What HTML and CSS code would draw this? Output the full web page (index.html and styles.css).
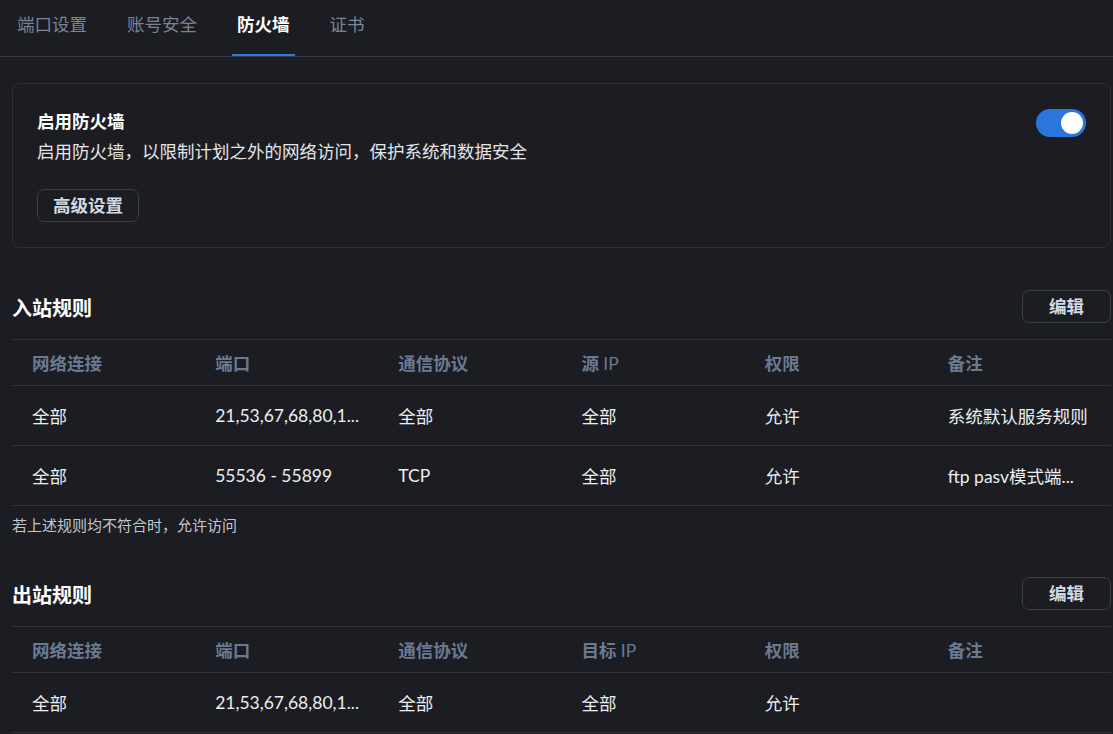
FILE: index.html
```html
<!DOCTYPE html>
<html lang="zh-CN">
<head>
<meta charset="utf-8">
<title>防火墙</title>
<link rel="stylesheet" href="styles.css">
</head>
<body>
<div class="page">
  <nav class="tabs">
    <div class="tab">端口设置</div>
    <div class="tab">账号安全</div>
    <div class="tab active">防火墙</div>
    <div class="tab">证书</div>
  </nav>

  <section class="card">
    <div class="card-text">
      <div class="card-title">启用防火墙</div>
      <div class="card-desc">启用防火墙，以限制计划之外的网络访问，保护系统和数据安全</div>
      <button class="btn btn-adv">高级设置</button>
    </div>
    <div class="switch"><span class="knob"></span></div>
  </section>

  <section class="rules">
    <div class="rules-head">
      <h2>入站规则</h2>
      <button class="btn btn-edit">编辑</button>
    </div>
    <div class="table">
      <div class="row head">
        <div class="cell">网络连接</div>
        <div class="cell">端口</div>
        <div class="cell">通信协议</div>
        <div class="cell">源 <span class="lat">IP</span></div>
        <div class="cell">权限</div>
        <div class="cell">备注</div>
      </div>
      <div class="row">
        <div class="cell">全部</div>
        <div class="cell">21,53,67,68,80,1...</div>
        <div class="cell">全部</div>
        <div class="cell">全部</div>
        <div class="cell">允许</div>
        <div class="cell">系统默认服务规则</div>
      </div>
      <div class="row">
        <div class="cell">全部</div>
        <div class="cell">55536 - 55899</div>
        <div class="cell">TCP</div>
        <div class="cell">全部</div>
        <div class="cell">允许</div>
        <div class="cell">ftp pasv模式端...</div>
      </div>
    </div>
    <p class="note">若上述规则均不符合时，允许访问</p>
  </section>

  <section class="rules">
    <div class="rules-head">
      <h2>出站规则</h2>
      <button class="btn btn-edit">编辑</button>
    </div>
    <div class="table">
      <div class="row head">
        <div class="cell">网络连接</div>
        <div class="cell">端口</div>
        <div class="cell">通信协议</div>
        <div class="cell">目标 <span class="lat">IP</span></div>
        <div class="cell">权限</div>
        <div class="cell">备注</div>
      </div>
      <div class="row">
        <div class="cell">全部</div>
        <div class="cell">21,53,67,68,80,1...</div>
        <div class="cell">全部</div>
        <div class="cell">全部</div>
        <div class="cell">允许</div>
        <div class="cell"></div>
      </div>
    </div>
  </section>
</div>
</body>
</html>
```

FILE: styles.css
```css
html, body {
  margin: 0;
  padding: 0;
  background: #1b1d22;
  height: 100%;
  overflow: hidden;
}
body {
  font-family: "Lato", "Noto Sans CJK SC", sans-serif;
  color: #e6e8eb;
  font-size: 17.5px;
}
.page {
  padding: 0 2px 0 12px;
}
.tabs {
  display: flex;
  gap: 30px;
  height: 56px;
  border-bottom: 1px solid #383c42;
  margin-right: -2px;
  margin-left: -12px;
  padding-left: 12px;
}
.tab {
  padding: 13px 5px 0;
  height: 43px;
  line-height: 24px;
  font-size: 17.5px;
  color: #7a8494;
  box-sizing: content-box;
}
.tab.active {
  color: #ffffff;
  font-weight: 700;
  box-shadow: inset 0 -2px 0 #2a78e0;
}
.card {
  margin-top: 26px;
  border: 1px solid #2d3036;
  border-radius: 8px;
  padding: 25px 24px 25px 24px;
  display: flex;
  justify-content: space-between;
  align-items: flex-start;
}
.card-title {
  font-weight: 700;
  color: #ffffff;
  line-height: 26px;
}
.card-desc {
  margin-top: 4px;
  line-height: 26px;
  color: #e3e5e8;
}
.btn {
  font-family: "Lato", "Noto Sans CJK SC", sans-serif;
  background: transparent;
  border: 1px solid #3b3f46;
  border-radius: 7px;
  color: #d3d9e2;
  font-weight: 700;
  font-size: 17.5px;
  height: 33px;
  line-height: 31px;
  padding: 0;
  display: block;
}
.btn-adv {
  margin-top: 24px;
  width: 102px;
}
.btn-edit {
  width: 89px;
}
.switch {
  width: 50px;
  height: 28px;
  border-radius: 14px;
  background: #2a76dc;
  display: flex;
  align-items: center;
  justify-content: flex-end;
  padding-right: 3px;
  box-sizing: border-box;
}
.knob {
  width: 22px;
  height: 22px;
  border-radius: 50%;
  background: #ffffff;
}
.rules-head {
  margin-top: 42px;
  display: flex;
  justify-content: space-between;
  align-items: center;
  height: 33px;
}
.rules-head h2 {
  margin: 0;
  font-size: 20px;
  font-weight: 700;
  color: #ffffff;
  padding-top: 2px;
}
.table {
  margin-top: 16px;
  border-top: 1px solid #2f3238;
}
.row {
  display: grid;
  grid-template-columns: repeat(6, 1fr);
  height: 59px;
  border-bottom: 1px solid #2f3238;
  align-items: center;
}
.row.head {
  height: 45px;
  color: #6a7a92;
  font-weight: 700;
}
.lat {
  font-weight: 400;
}
.cell {
  padding-left: 20px;
  white-space: nowrap;
  overflow: hidden;
}
.row:not(.head) .cell {
  color: #eceef0;
}
.note {
  margin: 9px 0 0;
  font-size: 15px;
  line-height: 20px;
  color: #c3c7cd;
}
```
